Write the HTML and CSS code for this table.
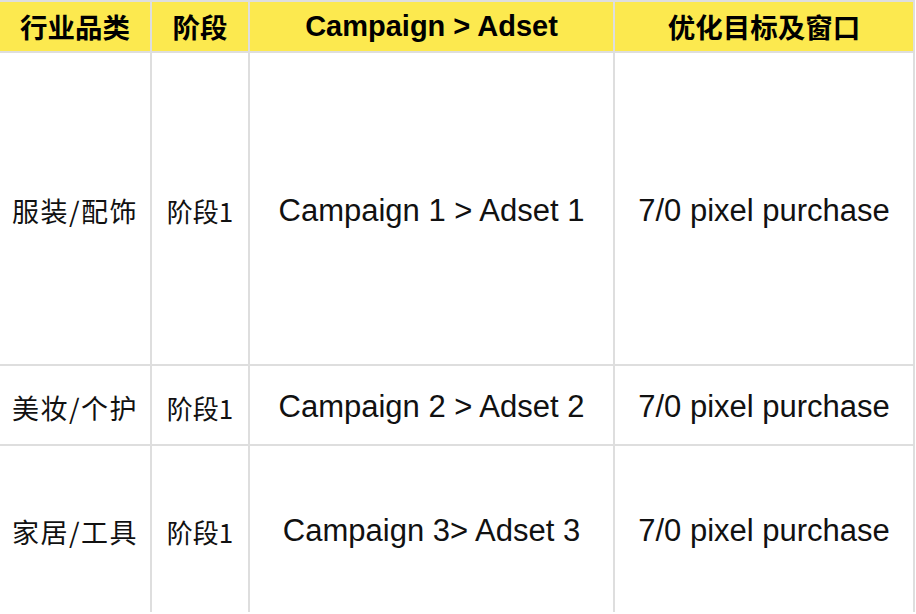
FILE: index.html
```html
<!DOCTYPE html>
<html lang="zh">
<head>
<meta charset="utf-8">
<link rel="stylesheet" href="styles.css">
</head>
<body>
<div class="table">
  <div class="cell head cjk">行业品类</div>
  <div class="cell head cjk">阶段</div>
  <div class="cell head latin">Campaign &gt; Adset</div>
  <div class="cell head cjk">优化目标及窗口</div>

  <div class="cell cjk cat">服装/配饰</div>
  <div class="cell cjk">阶段1</div>
  <div class="cell latin">Campaign 1 &gt; Adset 1</div>
  <div class="cell latin">7/0 pixel purchase</div>

  <div class="cell cjk cat">美妆/个护</div>
  <div class="cell cjk">阶段1</div>
  <div class="cell latin">Campaign 2 &gt; Adset 2</div>
  <div class="cell latin">7/0 pixel purchase</div>

  <div class="cell cjk cat">家居/工具</div>
  <div class="cell cjk">阶段1</div>
  <div class="cell latin">Campaign 3&gt; Adset 3</div>
  <div class="cell latin">7/0 pixel purchase</div>
</div>
</body>
</html>
```

FILE: styles.css
```css
html, body {
  margin: 0;
  padding: 0;
  background: #ffffff;
}
body {
  width: 916px;
  height: 614px;
  overflow: hidden;
}
.table {
  display: grid;
  grid-template-columns: 150px 96px 363px 298px;
  grid-template-rows: 49px 311px 78px 166px;
  gap: 2px;
  padding: 2px 2px 0 0;
  width: 913px;
  background: #dedede;
}
.cell {
  background: #ffffff;
  display: flex;
  align-items: center;
  justify-content: center;
  color: #111111;
  white-space: nowrap;
  padding-top: 4px;
  box-sizing: border-box;
}
.cell.head {
  background: #fce94f;
  color: #000000;
  font-weight: 700;
  padding-top: 0;
  padding-bottom: 1px;
}
.cjk {
  font-family: "Noto Sans CJK SC", "Liberation Sans", sans-serif;
  font-size: 26px;
}
.cjk.cat {
  font-size: 27px;
  letter-spacing: 1.5px;
}
.head.cjk {
  font-size: 27.5px;
  font-family: "Liberation Sans", "Noto Sans CJK SC", sans-serif;
}
.latin {
  font-family: "Liberation Sans", "Noto Sans CJK SC", sans-serif;
  font-size: 31px;
}
.head.latin {
  font-size: 29px;
}
```
